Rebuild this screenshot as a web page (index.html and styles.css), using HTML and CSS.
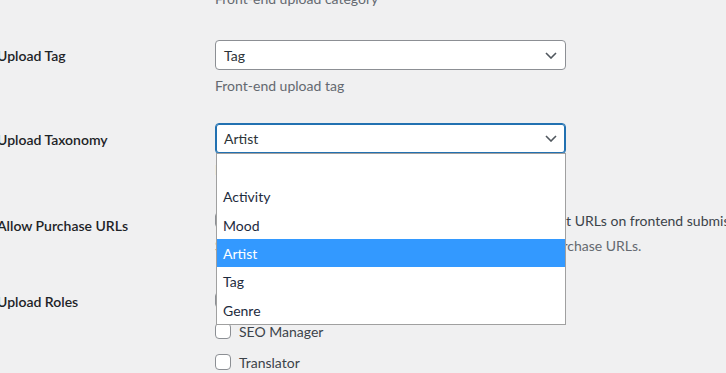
FILE: index.html
```html
<!DOCTYPE html>
<html lang="en">
  <head>
    <meta charset="UTF-8" />
    <title>Upload Settings</title>
    <link rel="stylesheet" href="styles.css">
  </head>
  <body>
    <div class="settings">
      <div class="row row-first">
        <div class="row-label"></div>
        <div class="row-field">
          <p class="description">Front-end upload category</p>
        </div>
      </div>

      <div class="row row-tag">
        <div class="row-label">Upload Tag</div>
        <div class="row-field">
          <div class="select">
            <span>Tag</span>
            <svg class="chevron" width="12" height="7" viewBox="0 0 12 7">
              <polyline points="1,1 6,6 11,1" fill="none" stroke="#50575e" stroke-width="1.6" />
            </svg>
          </div>
          <p class="description">Front-end upload tag</p>
        </div>
      </div>

      <div class="row row-taxonomy">
        <div class="row-label">Upload Taxonomy</div>
        <div class="row-field">
          <div class="dropdown">
            <div class="select is-open">
              <span>Artist</span>
              <svg class="chevron" width="12" height="7" viewBox="0 0 12 7">
                <polyline points="1,1 6,6 11,1" fill="none" stroke="#50575e" stroke-width="1.6" />
              </svg>
            </div>
            <ul class="options">
              <li></li>
              <li>Activity</li>
              <li>Mood</li>
              <li class="selected">Artist</li>
              <li>Tag</li>
              <li>Genre</li>
            </ul>
          </div>
          <p class="description">Front-end upload taxonomy</p>
        </div>
      </div>

      <div class="row row-purchase">
        <div class="row-label">Allow Purchase URLs</div>
        <div class="row-field">
          <label class="check"><span class="box"></span>Allow uploaders and artists to enter their own product URLs on frontend submissions.</label>
          <p class="description">Show a buy button on tracks &amp; albums that have their purchase URLs.</p>
        </div>
      </div>

      <div class="row row-roles">
        <div class="row-label">Upload Roles</div>
        <div class="row-field">
          <label class="check"><span class="box"></span>Author</label>
          <label class="check"><span class="box"></span>SEO Manager</label>
          <label class="check"><span class="box"></span>Translator</label>
        </div>
      </div>
    </div>
  </body>
</html>
```

FILE: styles.css
```css
* {
  margin: 0;
  padding: 0;
  box-sizing: border-box;
}

body {
  background-color: #f0f0f1;
  font-family: "Lato", "Liberation Sans", sans-serif;
  font-size: 14px;
  color: #3c434a;
  overflow: hidden;
  height: 373px;
}

.settings {
  margin-top: -12px;
  margin-left: -3px;
}

.row {
  display: grid;
  grid-template-columns: 218px 1fr;
}

.row-label {
  font-weight: 600;
  color: #1d2327;
  line-height: 18px;
  padding-top: 22px;
}

.row-field {
  padding-top: 15px;
  padding-bottom: 13px;
  min-width: 0;
}

.row-first .row-field {
  padding-top: 0;
  padding-bottom: 16px;
}

.row-taxonomy .row-field {
  padding-top: 14px;
  padding-bottom: 13px;
}

.row-purchase .row-label {
  padding-top: 24px;
}

.row-purchase .row-field {
  padding-bottom: 12px;
}

.row-roles .row-label {
  padding-top: 25px;
}

.row-roles .row-field {
  padding-top: 20px;
  display: flex;
  flex-direction: column;
  gap: 7px;
}

.description {
  color: #646970;
  line-height: 21px;
  margin-top: 5px;
  white-space: nowrap;
}

.row-first .description {
  margin-top: 0;
}

.row-purchase .description {
  margin-top: 3px;
}

/* select box */
.select {
  display: flex;
  align-items: center;
  justify-content: space-between;
  width: 351px;
  height: 30px;
  padding: 0 8px 0 8px;
  background: white;
  border: 1px solid #8c8f94;
  border-radius: 4px;
  color: #2c3338;
}

.select.is-open {
  height: 31px;
  border-color: #2271b1;
  box-shadow: inset 0 0 0 1px #2271b1;
}

.dropdown {
  position: relative;
}

.options {
  position: absolute;
  top: 30px;
  left: 1px;
  width: 350px;
  list-style: none;
  background: white;
  border: 1px solid #a0a0a0;
  z-index: 10;
}

.options li {
  height: 28.33px;
  line-height: 30px;
  padding-left: 6px;
  color: #1d2b3e;
}

.options li.selected {
  background-color: #3399ff;
  color: white;
}

/* checkboxes */
.check {
  display: flex;
  align-items: center;
  gap: 8px;
  height: 24px;
  color: #3c434a;
  white-space: nowrap;
}

.box {
  flex: none;
  width: 16px;
  height: 16px;
  background: white;
  border: 1px solid #8c8f94;
  border-radius: 4px;
}
```
